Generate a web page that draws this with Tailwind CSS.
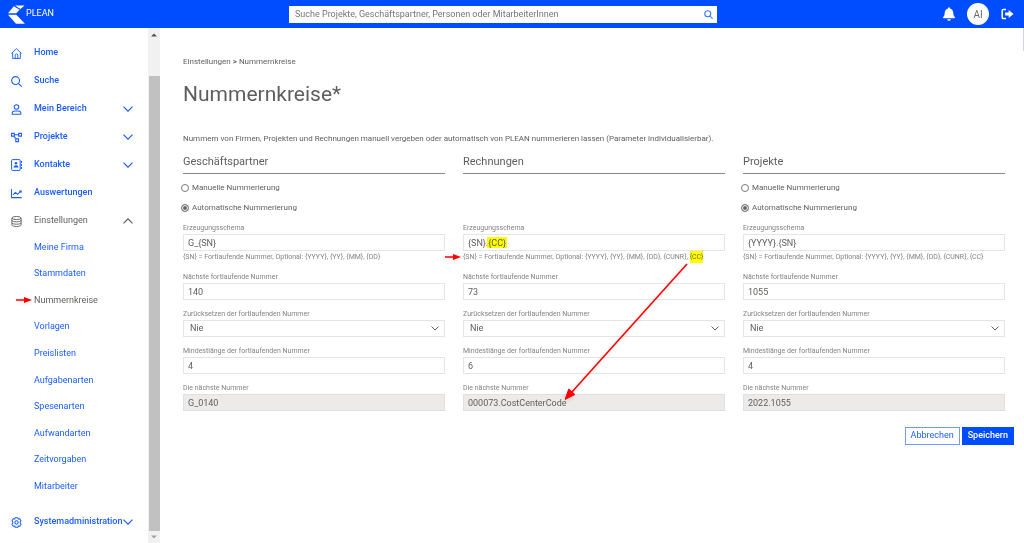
<!DOCTYPE html>
<html lang="de">
<head>
<meta charset="utf-8">
<meta name="viewport" content="width=device-width, initial-scale=1">
<title>PLEAN – Nummernkreise</title>
<script src="https://cdn.jsdelivr.net/npm/@tailwindcss/browser@4"></script>
</head>
<body class="flex h-screen flex-col overflow-hidden bg-white font-['Roboto',sans-serif] text-[8px] text-[#605e5c]">
<header class="flex h-7 shrink-0 items-center bg-[#004dff] pr-[10px] pl-2">
  <a href="#" class="flex w-[281px] items-center gap-[1px] text-[9px] text-white">
    <svg class="h-[19px] w-[17px]" viewBox="0 0 17 19" fill="#fff"><path d="M7 .5h9.5L12.5 4z"/><path d="M5.8 1.3 11.6 4.8 8.3 8.3H0z"/><path d="M0 9.8h8.3L17 18.7H8z"/></svg>
    <span>PLEAN</span>
  </a>
  <form class="flex h-[17px] w-[428px] items-center bg-white px-[6px]">
    <input aria-label="Suche" type="text" placeholder="Suche Projekte, Geschäftspartner, Personen oder MitarbeiterInnen" class="h-[17px] min-w-0 flex-1 text-[9px] outline-none placeholder:text-[#76767a]">
    <button type="button" aria-label="Suchen" class="-mr-[2px]"><svg class="size-[9px]" viewBox="0 0 12 12" fill="none" stroke="#3b76ff" stroke-width="1.4"><circle cx="5" cy="5" r="4"/><path d="m8 8 3.4 3.4"/></svg></button>
  </form>
  <div class="ml-auto flex items-center gap-3 text-white">
    <button type="button" aria-label="Benachrichtigungen"><svg class="h-[14px] w-3" viewBox="0 0 448 512" fill="currentColor"><path d="M224 512c35.300 0 63.900-28.700 63.900-64H160.100c0 35.300 28.600 64 63.900 64zm215.400-149.700c-19.300-20.800-55.500-52-55.500-154.300 0-77.700-54.500-139.900-127.900-155.200V32c0-17.700-14.300-32-32-32s-32 14.300-32 32v20.800C118.600 68.100 64.100 130.300 64.100 208c0 102.300-36.200 133.500-55.500 154.300-6 6.400-8.700 14.200-8.600 21.700.1 16.400 13 32 32.100 32h383.800c19.100 0 32-15.600 32.100-32 .1-7.500-2.600-15.300-8.600-21.700z"/></svg></button>
    <button type="button" class="flex size-[22px] items-center justify-center rounded-full bg-white text-[10px] text-[#6b6b6b]">AI</button>
    <button type="button" aria-label="Abmelden"><svg class="h-3 w-[13px]" viewBox="0 0 13 12"><path d="M5 1.500H2.300Q1.200 1.500 1.200 2.600v6.800q0 1.100 1.100 1.100H5" fill="none" stroke="#fff" stroke-width="1.500"/><path d="M4.200 4.600h3.500V2L12.500 6 7.700 10V7.400H4.200z" fill="#fff"/></svg></button>
  </div>
</header>
<div class="flex min-h-0 flex-1">
  <aside class="flex w-40 shrink-0 text-[9px]">
    <nav class="flex min-w-0 flex-1 flex-col pt-[11px] pb-[7px] text-[#1a5cff]">
      <a href="#" class="flex h-7 shrink-0 items-center gap-3 pl-[11px] font-medium"><svg class="size-[11px]" viewBox="0 0 12 12" fill="none" stroke="currentColor"><path d="M.4 6 6 .8 11.600 6M1.800 5v6.400h8.400V5M4.600 11.400V7.800Q4.600 6.500 6 6.500t1.400 1.300v3.600"/></svg>Home</a>
      <a href="#" class="flex h-7 shrink-0 items-center gap-3 pl-[11px] font-medium"><svg class="size-[11px]" viewBox="0 0 12 12" fill="none" stroke="currentColor" stroke-width="1.200"><circle cx="5" cy="5" r="4.300"/><path d="m8.100 8.100 3.600 3.600"/></svg>Suche</a>
      <button type="button" class="flex h-7 shrink-0 items-center gap-3 pr-[15px] pl-[11px] font-medium"><svg class="size-[11px]" viewBox="0 0 12 12" fill="none" stroke="currentColor" stroke-width="1.100"><circle cx="6" cy="3.300" r="2.500"/><path d="M1.300 11.300V10.200Q1.300 7.600 4 7.600h4q2.700 0 2.700 2.600v1.100z"/></svg>Mein Bereich<svg class="ml-auto h-[6px] w-[10px]" viewBox="0 0 10 6" fill="none" stroke="currentColor" stroke-width="1.200"><path d="m.5.700 4.500 4.500L9.500.700"/></svg></button>
      <button type="button" class="flex h-7 shrink-0 items-center gap-3 pr-[15px] pl-[11px] font-medium"><svg class="size-[11px]" viewBox="0 0 12 12" fill="none" stroke="currentColor" stroke-width="1.100"><path d="M.6 1.500h3v3h-3zM8.400 1.500h3v3h-3zM5.200 7.500h3v3h-3zM3.600 3h4.800M3 4.500l2.600 3"/></svg>Projekte<svg class="ml-auto h-[6px] w-[10px]" viewBox="0 0 10 6" fill="none" stroke="currentColor" stroke-width="1.200"><path d="m.5.700 4.500 4.500L9.500.700"/></svg></button>
      <button type="button" class="flex h-7 shrink-0 items-center gap-3 pr-[15px] pl-[11px] font-medium"><svg class="h-3 w-[11px]" viewBox="0 0 11 12" fill="none" stroke="currentColor"><rect x=".6" y=".6" width="8.600" height="10.800" rx="1"/><path d="M10.500 2v2M10.500 5v2M10.500 8v2"/><circle cx="5" cy="4.300" r="1.300" fill="currentColor" stroke="none"/><path d="M2.500 8.600Q2.500 6.200 5 6.200t2.500 2.400z" fill="currentColor" stroke="none"/></svg>Kontakte<svg class="ml-auto h-[6px] w-[10px]" viewBox="0 0 10 6" fill="none" stroke="currentColor" stroke-width="1.200"><path d="m.5.700 4.500 4.500L9.500.700"/></svg></button>
      <a href="#" class="flex h-7 shrink-0 items-center gap-3 pl-[11px] font-medium"><svg class="size-[11px]" viewBox="0 0 12 12" fill="none" stroke="currentColor" stroke-width="1.100"><path d="M.6 1v9.500h11M2.200 7.500 4.800 4.800 7.200 7l3.700-3.700M8.700 3.200h2.400v2"/></svg>Auswertungen</a>
      <button type="button" class="flex h-7 shrink-0 items-center gap-3 pr-[15px] pl-[11px] text-[#605e5c]"><svg class="size-[11px]" viewBox="0 0 12 12" fill="none" stroke="currentColor"><ellipse cx="6" cy="2.200" rx="5" ry="1.700"/><path d="M1 2.200v7.600c0 2.200 10 2.200 10 0V2.200M1 4.700c0 2.200 10 2.200 10 0M1 7.300c0 2.200 10 2.200 10 0"/></svg>Einstellungen<svg class="ml-auto h-[6px] w-[10px]" viewBox="0 0 10 6" fill="none" stroke="currentColor" stroke-width="1.200"><path d="m.5 5.300L5 .8l4.500 4.500"/></svg></button>
      <ul class="-mt-[1px] mb-2 flex flex-1 flex-col pl-[34px]">
        <li class="flex flex-1 items-center"><a href="#">Meine Firma</a></li>
        <li class="flex flex-1 items-center"><a href="#">Stammdaten</a></li>
        <li class="relative flex flex-1 items-center text-[#605e5c]"><svg class="absolute -left-[18px] h-2 w-4 drop-shadow-sm" viewBox="0 0 16 8" fill="#f00"><path d="M0 3.300h8V1l8 3-8 3V4.700H0z"/></svg><a href="#" aria-current="page">Nummernkreise</a></li>
        <li class="flex flex-1 items-center"><a href="#">Vorlagen</a></li>
        <li class="flex flex-1 items-center"><a href="#">Preislisten</a></li>
        <li class="flex flex-1 items-center"><a href="#">Aufgabenarten</a></li>
        <li class="flex flex-1 items-center"><a href="#">Spesenarten</a></li>
        <li class="flex flex-1 items-center"><a href="#">Aufwandarten</a></li>
        <li class="flex flex-1 items-center"><a href="#">Zeitvorgaben</a></li>
        <li class="flex flex-1 items-center"><a href="#">Mitarbeiter</a></li>
      </ul>
      <button type="button" class="flex h-7 shrink-0 items-center pr-[15px] pl-[11px] font-medium"><svg class="mr-3 size-[11px] shrink-0" viewBox="0 0 12 12" fill="none" stroke="currentColor" stroke-width="1.100"><path d="m4.600.7h2.800l.5 1.500 1.600-.3 1.500 2.200L10 5.300v1.400l1 1.200-1.500 2.200-1.600-.3-.5 1.500H4.600l-.5-1.500-1.600.3L1 7.900l1-1.200V5.300L1 4.100l1.500-2.200 1.600.3z" stroke-linejoin="round"/><circle cx="6" cy="6" r="1.800"/></svg>Systemadministration<svg class="ml-auto h-[6px] w-[10px] shrink-0" viewBox="0 0 10 6" fill="none" stroke="currentColor" stroke-width="1.200"><path d="m.5.700 4.500 4.500L9.500.700"/></svg></button>
    </nav>
    <div class="flex w-3 shrink-0 flex-col items-center bg-[#f1f1f1]">
      <svg class="mt-[5px] h-1 w-[6px]" viewBox="0 0 6 4" fill="#505050"><path d="m0 3.500 3-3 3 3z"/></svg>
      <div class="mt-[39px] w-[11px] flex-1 bg-[#c1c1c1]"></div>
      <svg class="mt-1 mb-1 h-1 w-[6px]" viewBox="0 0 6 4" fill="#a3a3a3"><path d="m0 .5 3 3 3-3z"/></svg>
    </div>
  </aside>
  <main class="relative min-w-0 flex-1 pt-7 pr-[10px] pl-[23px]">
    <div class="absolute top-0 right-0 h-[23px] w-px bg-[#d5d2ee]"></div>
    <nav aria-label="Brotkrumen" class="h-3 leading-3"><a href="#">Einstellungen</a> <b>&gt;</b> <a href="#">Nummernkreise</a></nav>
    <h1 class="mt-[11px] text-[21px] leading-[30px]">Nummernkreise*</h1>
    <p class="mt-6 leading-3">Nummern von Firmen, Projekten und Rechnungen manuell vergeben oder automatisch von PLEAN nummerieren lassen (Parameter individualisierbar).</p>
    <form>
      <div class="mt-[9px] grid grid-cols-3 gap-[18px] pr-[9px]">
        <section>
          <h2 class="h-5 border-b border-[#8a8886] text-[11px] leading-4">Geschäftspartner</h2>
          <label class="mt-2 -ml-[2px] flex h-3 items-center gap-[3px]"><input type="radio" name="gp" class="size-2 appearance-none rounded-full border border-[#7a7a7a] checked:bg-[#666] checked:shadow-[inset_0_0_0_1px_#fff]">Manuelle Nummerierung</label>
          <label class="mt-2 -ml-[2px] flex h-3 items-center gap-[3px]"><input type="radio" name="gp" checked class="size-2 appearance-none rounded-full border border-[#7a7a7a] checked:bg-[#666] checked:shadow-[inset_0_0_0_1px_#fff]">Automatische Nummerierung</label>
          <label for="gp1" class="mt-2 block h-3 text-[7px] leading-3 text-[#858381]">Erzeugungsschema</label>
          <input id="gp1" value="G_{SN}" class="block h-[17px] w-full border border-[#e6e5e4] px-1 text-[9px]">
          <p class="h-3 text-[7px] leading-3 text-[#858381]">{SN} = Fortlaufende Nummer, Optional: {YYYY}, {YY}, {MM}, {DD}</p>
          <label for="gp2" class="mt-2 block h-3 text-[7px] leading-3 text-[#858381]">Nächste fortlaufende Nummer</label>
          <input id="gp2" value="140" class="block h-[17px] w-full border border-[#e6e5e4] px-1 text-[9px]">
          <label for="gp3" class="mt-2 block h-3 text-[7px] leading-3 text-[#858381]">Zurücksetzen der fortlaufenden Nummer</label>
          <div class="relative"><select id="gp3" class="block h-[17px] w-full appearance-none border border-[#e6e5e4] px-[6px] text-[9px]"><option>Nie</option></select><svg class="pointer-events-none absolute top-[6px] right-[6px] h-[5px] w-2" viewBox="0 0 8 5" fill="none" stroke="#605e5c"><path d="m.5.500L4 4 7.500.500"/></svg></div>
          <label for="gp4" class="mt-2 block h-3 text-[7px] leading-3 text-[#858381]">Mindestlänge der fortlaufenden Nummer</label>
          <input id="gp4" value="4" class="block h-[17px] w-full border border-[#e6e5e4] px-1 text-[9px]">
          <label for="gp5" class="mt-2 block h-3 text-[7px] leading-3 text-[#858381]">Die nächste Nummer</label>
          <input id="gp5" readonly value="G_0140" class="block h-[17px] w-full border border-[#e1dfdd] bg-[#edebe9] px-1 text-[9px]">
        </section>
        <section class="relative">
          <h2 class="h-5 border-b border-[#8a8886] text-[11px] leading-4">Rechnungen</h2>
          <div class="h-10"></div>
          <label for="re1" class="mt-2 block h-3 text-[7px] leading-3 text-[#858381]">Erzeugungsschema</label>
          <div class="relative"><input id="re1" value="{SN}.{CC}" class="block h-[17px] w-full border border-[#e6e5e4] px-1 text-[9px]"><span class="absolute top-[3px] left-6 h-[11px] w-5 bg-[#ff0] mix-blend-multiply"></span></div>
          <p class="relative h-3 text-[7px] leading-3 whitespace-nowrap text-[#858381]"><svg class="absolute top-[2px] -left-[18px] h-2 w-4 drop-shadow-sm" viewBox="0 0 16 8" fill="#f00"><path d="M0 3.300h8V1l8 3-8 3V4.700H0z"/></svg>{SN} = Fortlaufende Nummer, Optional: {YYYY}, {YY}, {MM}, {DD}, {CUNR}, <mark class="bg-[#ff0] py-[2px] text-[#706e20]">{CC}</mark></p>
          <label for="re2" class="mt-2 block h-3 text-[7px] leading-3 text-[#858381]">Nächste fortlaufende Nummer</label>
          <input id="re2" value="73" class="block h-[17px] w-full border border-[#e6e5e4] px-1 text-[9px]">
          <label for="re3" class="mt-2 block h-3 text-[7px] leading-3 text-[#858381]">Zurücksetzen der fortlaufenden Nummer</label>
          <div class="relative"><select id="re3" class="block h-[17px] w-full appearance-none border border-[#e6e5e4] px-[6px] text-[9px]"><option>Nie</option></select><svg class="pointer-events-none absolute top-[6px] right-[6px] h-[5px] w-2" viewBox="0 0 8 5" fill="none" stroke="#605e5c"><path d="m.5.500L4 4 7.500.500"/></svg></div>
          <label for="re4" class="mt-2 block h-3 text-[7px] leading-3 text-[#858381]">Mindestlänge der fortlaufenden Nummer</label>
          <input id="re4" value="6" class="block h-[17px] w-full border border-[#e6e5e4] px-1 text-[9px]">
          <label for="re5" class="mt-2 block h-3 text-[7px] leading-3 text-[#858381]">Die nächste Nummer</label>
          <input id="re5" readonly value="000073.CostCenterCode" class="block h-[17px] w-full border border-[#e1dfdd] bg-[#edebe9] px-1 text-[9px]">
          <svg class="pointer-events-none absolute bottom-[11px] left-[102px] h-[137px] w-[123px] drop-shadow-sm" viewBox="0 0 123 137"><path d="M122 1 6 130" stroke="#f00" stroke-width="1.600"/><path d="M0 136.500 3.800 126l6 5.500z" fill="#f00" stroke="#f00"/></svg>
        </section>
        <section>
          <h2 class="h-5 border-b border-[#8a8886] text-[11px] leading-4">Projekte</h2>
          <label class="mt-2 -ml-[2px] flex h-3 items-center gap-[3px]"><input type="radio" name="pr" class="size-2 appearance-none rounded-full border border-[#7a7a7a] checked:bg-[#666] checked:shadow-[inset_0_0_0_1px_#fff]">Manuelle Nummerierung</label>
          <label class="mt-2 -ml-[2px] flex h-3 items-center gap-[3px]"><input type="radio" name="pr" checked class="size-2 appearance-none rounded-full border border-[#7a7a7a] checked:bg-[#666] checked:shadow-[inset_0_0_0_1px_#fff]">Automatische Nummerierung</label>
          <label for="pr1" class="mt-2 block h-3 text-[7px] leading-3 text-[#858381]">Erzeugungsschema</label>
          <input id="pr1" value="{YYYY}.{SN}" class="block h-[17px] w-full border border-[#e6e5e4] px-1 text-[9px]">
          <p class="h-3 text-[7px] leading-3 whitespace-nowrap text-[#858381]">{SN} = Fortlaufende Nummer, Optional: {YYYY}, {YY}, {MM}, {DD}, {CUNR}, {CC}</p>
          <label for="pr2" class="mt-2 block h-3 text-[7px] leading-3 text-[#858381]">Nächste fortlaufende Nummer</label>
          <input id="pr2" value="1055" class="block h-[17px] w-full border border-[#e6e5e4] px-1 text-[9px]">
          <label for="pr3" class="mt-2 block h-3 text-[7px] leading-3 text-[#858381]">Zurücksetzen der fortlaufenden Nummer</label>
          <div class="relative"><select id="pr3" class="block h-[17px] w-full appearance-none border border-[#e6e5e4] px-[6px] text-[9px]"><option>Nie</option></select><svg class="pointer-events-none absolute top-[6px] right-[6px] h-[5px] w-2" viewBox="0 0 8 5" fill="none" stroke="#605e5c"><path d="m.5.500L4 4 7.500.500"/></svg></div>
          <label for="pr4" class="mt-2 block h-3 text-[7px] leading-3 text-[#858381]">Mindestlänge der fortlaufenden Nummer</label>
          <input id="pr4" value="4" class="block h-[17px] w-full border border-[#e6e5e4] px-1 text-[9px]">
          <label for="pr5" class="mt-2 block h-3 text-[7px] leading-3 text-[#858381]">Die nächste Nummer</label>
          <input id="pr5" readonly value="2022.1055" class="block h-[17px] w-full border border-[#e1dfdd] bg-[#edebe9] px-1 text-[9px]">
        </section>
      </div>
      <div class="mt-4 flex justify-end gap-[2px] text-[9px]">
        <button type="button" class="h-[18px] border border-[#6f9aff] px-[5px] text-[#1a5cff]">Abbrechen</button>
        <button type="button" class="h-[18px] bg-[#004dff] px-[6px] font-medium text-white">Speichern</button>
      </div>
    </form>
  </main>
</div>
</body>
</html>
